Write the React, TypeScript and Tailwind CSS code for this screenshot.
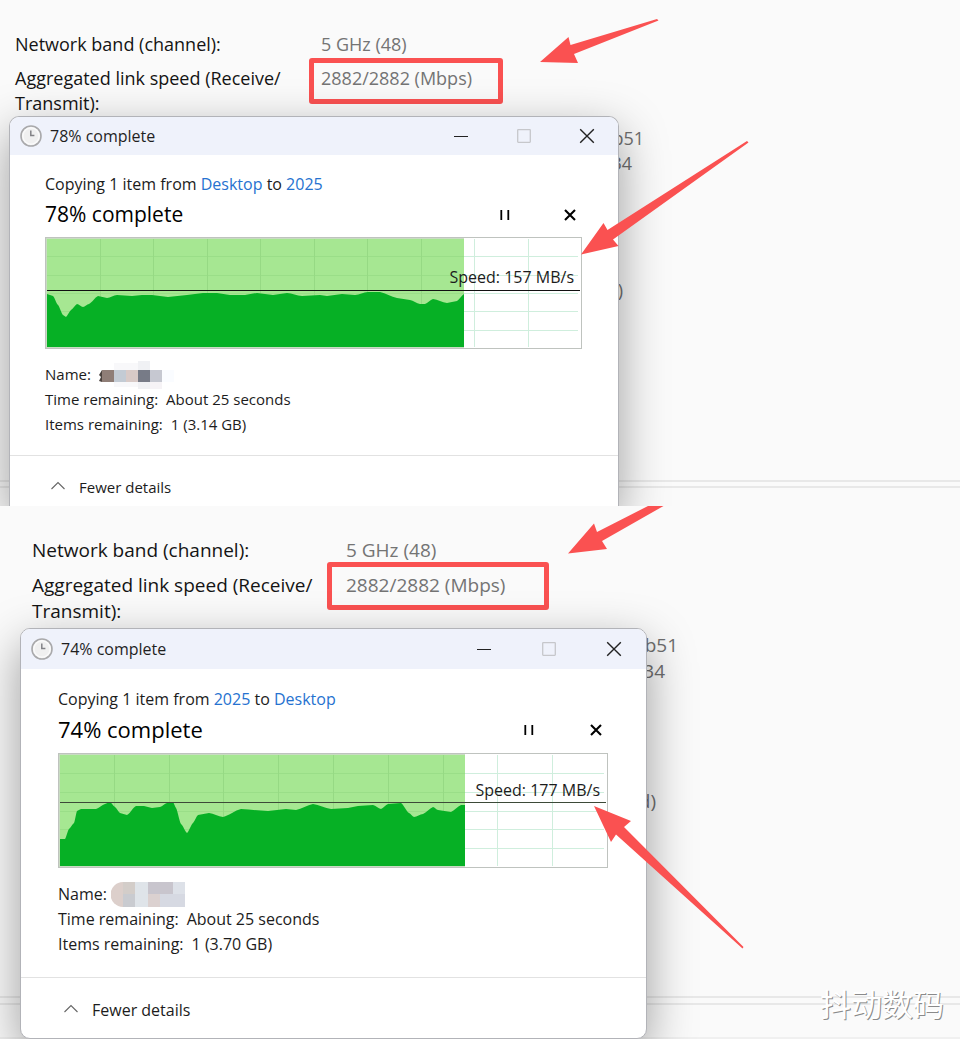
import type { ReactNode } from "react";
import clsx from "clsx";

type Point = [number, number];

// joins the samples with soft shoulders, then closes the area at the bottom
function areaPath(points: Point[], height: number) {
  let d = `M${points[0][0]} ${height}L${points[0][0]} ${points[0][1]}`;
  for (let i = 1; i < points.length; i++) {
    const [x0, y0] = points[i - 1];
    const [x1, y1] = points[i];
    const slope = (y1 - y0) / 6;
    const dx = (x1 - x0) / 3;
    d += `C${x0 + dx} ${y0 + slope} ${x1 - dx} ${y1 - slope} ${x1} ${y1}`;
  }
  return `${d}V${height}Z`;
}

const receiveSamples: Point[] = [
  [1, 56], [7, 58], [12, 67], [17, 77], [20, 79], [25, 72], [31, 66], [37, 69],
  [43, 66], [52, 58], [61, 60], [71, 57], [86, 58], [96, 57], [106, 57],
  [122, 59], [141, 57], [157, 55], [171, 55], [184, 57], [199, 57], [211, 55],
  [227, 57], [241, 55], [256, 58], [274, 57], [281, 58], [296, 56], [309, 57],
  [322, 54], [334, 54], [351, 60], [364, 62], [374, 66], [379, 66], [387, 61],
  [401, 65], [411, 63], [418, 56],
];

const sendSamples: Point[] = [
  [1, 85], [6, 85], [10, 75], [15, 69], [18, 57], [22, 55], [37, 55], [46, 50],
  [51, 48], [56, 53], [61, 59], [68, 61], [77, 52], [85, 52], [93, 54],
  [101, 53], [108, 49], [114, 48], [117, 54], [122, 70], [128, 79], [134, 69],
  [139, 61], [150, 59], [164, 63], [182, 55], [209, 57], [227, 55], [237, 56],
  [254, 50], [272, 55], [289, 54], [299, 52], [314, 51], [322, 55], [329, 50],
  [342, 49], [350, 59], [355, 63], [364, 60], [374, 53], [379, 56], [392, 58],
  [402, 51], [406, 51],
];

interface ChartProps {
  width: number;
  height: number;
  done: number;
  level: number;
  samples: Point[];
  speed: string;
  lineColor: string;
  className: string;
  speedClassName: string;
}

function SpeedChart({
  width,
  height,
  done,
  level,
  samples,
  speed,
  lineColor,
  className,
  speedClassName,
}: ChartProps) {
  const cols = Array.from({ length: 9 }, (_, i) => Math.round(((i + 1) * width) / 10));
  const rows = Array.from({ length: 5 }, (_, i) => Math.round(((i + 1) * height) / 6));
  return (
    <div className={clsx("relative border border-[#bfc3bf]", className)}>
      <svg
        viewBox={`0 0 ${width} ${height}`}
        preserveAspectRatio="none"
        className="block h-full w-full"
        aria-hidden="true"
      >
        <rect width={width} height={height} fill="#fff" />
        {rows.map((y) => (
          <rect key={y} x={1} y={y} width={width - 4} height={1} fill="#cfeedd" />
        ))}
        {cols.map((x) => (
          <rect key={x} x={x} y={1} width={1} height={height - 2} fill="#cfeedd" />
        ))}
        <rect width={done} height={height} fill="#c9dcc2" />
        <rect x={1} y={1} width={done - 1} height={height - 2} fill="#a6e792" />
        {rows.map((y) => (
          <rect key={y} x={1} y={y} width={done - 1} height={1} fill="#9ade88" />
        ))}
        {cols
          .filter((x) => x < done)
          .map((x) => (
            <rect key={x} x={x} y={1} width={1} height={height - 2} fill="#96d984" />
          ))}
        <path d={areaPath(samples, height - 1)} fill="#06b025" />
        <rect x={1} y={level} width={width - 2} height={1} fill={lineColor} />
      </svg>
      <span className={clsx("absolute right-[7px] text-[16px] leading-6 text-[#1c1c1c]", speedClassName)}>
        {speed}
      </span>
    </div>
  );
}

function ClockIcon() {
  return (
    <svg viewBox="0 0 22 22" className="size-[22px]" aria-hidden="true">
      <circle cx="11" cy="11" r="10" fill="#e9e9e9" stroke="#a9a9ab" strokeWidth="1.6" />
      <circle cx="11" cy="11" r="8.2" fill="#f0f0f0" stroke="#fafafa" strokeWidth="1.6" />
      <path d="M10.8 5.5V10.6H14.4" fill="none" stroke="#828286" strokeWidth="1.5" />
    </svg>
  );
}

function WindowButton({ label, large, children }: { label: string; large?: boolean; children: ReactNode }) {
  return (
    <button
      type="button"
      aria-label={label}
      className={clsx("flex h-full items-center justify-center", large ? "w-[65px]" : "w-[63px]")}
    >
      <svg viewBox="0 0 16 16" className="size-4" fill="none">
        {children}
      </svg>
    </button>
  );
}

interface DialogProps {
  percent: string;
  from: string;
  to: string;
  size: string;
  large?: boolean;
  chart: ReactNode;
  mosaic: ReactNode;
}

function CopyDialog({ percent, from, to, size, large, chart, mosaic }: DialogProps) {
  return (
    <div
      className={clsx(
        "relative overflow-hidden border-[#b2b3b8] bg-white text-[16px] shadow-[0_16px_48px_rgba(0,0,0,0.38)]",
        large ? "rounded-[10px] border" : "rounded-t-[10px] border-x border-t",
      )}
    >
      <header className={clsx("flex items-center bg-[#eff2fb] pl-[10px]", large ? "h-10" : "h-[38px]")}>
        <ClockIcon />
        <h2 className="ml-2 flex-1 text-[#1f1f1f]">{percent} complete</h2>
        <WindowButton label="Minimize" large={large}>
          <path d="M1 8.5H15" stroke="#222" strokeWidth="1" />
        </WindowButton>
        <WindowButton label="Maximize" large={large}>
          <rect x="1.7" y="1.7" width="12.6" height="12.6" rx="0.5" stroke="#c6c7cb" strokeWidth="1.3" />
        </WindowButton>
        <WindowButton label="Close" large={large}>
          <path d="M1.2 1.2L14.8 14.8M14.8 1.2L1.2 14.8" stroke="#222" strokeWidth="1.4" />
        </WindowButton>
      </header>

      <div
        className={clsx(
          "text-[#1c1c1c]",
          large ? "pt-[18px] pr-[38px] pb-5 pl-[37px]" : "pt-[17px] pr-9 pb-[18px] pl-[35px]",
        )}
      >
        <p className="leading-6">
          Copying 1 item from{" "}
          <a href="#" className="text-[#2672d0]">{from}</a> to{" "}
          <a href="#" className="text-[#2672d0]">{to}</a>
        </p>
        <div className={clsx("mt-[3px] flex items-end", large ? "gap-[43px]" : "gap-[41px]")}>
          <h3 className={clsx("flex-1 leading-[30px] text-black", large ? "text-[22px]" : "text-[21px]")}>
            {percent} complete
          </h3>
          <button type="button" aria-label="Pause" className="flex h-7 w-6 items-center justify-center">
            <svg viewBox="0 0 12 12" className="size-3" fill="none">
              <path d="M2.3 1V11M9.3 1V11" stroke="#000" strokeWidth="1.8" />
            </svg>
          </button>
          <button type="button" aria-label="Cancel" className="flex h-7 w-6 items-center justify-center">
            <svg viewBox="0 0 12 12" className="size-3" fill="none">
              <path d="M1 1L11 11M11 1L1 11" stroke="#000" strokeWidth="2.1" />
            </svg>
          </button>
        </div>
        {chart}
        <div className={clsx("leading-[25px]", large ? "mt-[14px]" : "mt-[13px] text-[15px]")}>
          <p className={clsx("flex items-center", large ? "gap-1" : "gap-2")}>
            Name: {mosaic}
          </p>
          <p className="flex gap-2">
            <span>Time remaining:</span>
            <span>About 25 seconds</span>
          </p>
          <p className="flex gap-2">
            <span>Items remaining:</span>
            <span>{size}</span>
          </p>
        </div>
      </div>

      <footer
        className={clsx(
          "border-t border-[#e2e2e2]",
          large ? "pt-5 pb-4 pl-[42px]" : "pt-[19px] pb-[7px] pl-10 text-[15px]",
        )}
      >
        <button type="button" className="flex items-center gap-[13px] leading-6 text-[#1c1c1c]">
          <svg viewBox="0 0 16 16" className="size-4" fill="none" aria-hidden="true">
            <path d="M1.5 10L8 3.5L14.5 10" stroke="#666" strokeWidth="1.1" />
          </svg>
          Fewer details
        </button>
      </footer>
    </div>
  );
}

function LinkInfo({ large }: { large?: boolean }) {
  return (
    <dl
      className={clsx(
        "grid gap-y-[9px] text-[#141414]",
        large
          ? "grid-cols-[314px_1fr] pt-[31px] pl-8 text-[19px] leading-[26px]"
          : "grid-cols-[306px_1fr] pt-8 pl-[15px] text-[18px] leading-[25px]",
      )}
    >
      <dt>Network band (channel):</dt>
      <dd className="text-[#747474]">5 GHz (48)</dd>
      <dt>
        Aggregated link speed (Receive/
        <br />
        Transmit):
      </dt>
      <dd className="relative text-[#747474]">
        2882/2882 (Mbps)
        <span
          className={clsx(
            "absolute rounded-[3px] border-5 border-[#fa5151]",
            large ? "-top-[10px] -left-[19px] h-12 w-[222px]" : "-top-2 -left-3 h-[46px] w-[194px]",
          )}
        />
      </dd>
    </dl>
  );
}

export default function App() {
  return (
    <main className="bg-[#fafafa] font-['Open_Sans','Noto_Sans',sans-serif]">
      <section className="relative isolate overflow-hidden">
        <div className="absolute inset-x-0 bottom-0 -z-10 h-[26px] border-t-2 border-[#e8e8e8] bg-[#fafafa]" />
        <div className="absolute inset-x-0 bottom-0 -z-10 h-5 border-t-2 border-[#e8e8e8] bg-[#fafafa]" />
        <LinkInfo />
        <div className="relative isolate ml-[9px] w-full max-w-[610px]">
          <div className="absolute inset-0 -z-10 text-[18px] leading-[26px] text-[#6f6f6f]">
            <span className="absolute top-[9px] -right-[25px]">b51</span>
            <span className="absolute top-[34px] -right-[13px]">34</span>
            <span className="absolute top-[161px] -right-[4px]">)</span>
          </div>
          <CopyDialog
            percent="78%"
            from="Desktop"
            to="2025"
            size="1 (3.14 GB)"
            chart={
              <SpeedChart
                className="mt-2 h-28"
                speedClassName="bottom-[59px]"
                width={535}
                height={110}
                done={418}
                level={52}
                samples={receiveSamples}
                speed="Speed: 157 MB/s"
                lineColor="#111"
              />
            }
            mosaic={
              <svg viewBox="0 0 78 28" className="-my-1 h-7 w-[78px]" aria-hidden="true">
                <rect x="15" y="2" width="36" height="24" fill="#f8f8fa" />
                <rect x="39" y="0" width="12" height="28" fill="#f0f1f4" />
                <rect x="51" y="20" width="12" height="8" fill="#f6f3f6" />
                <rect x="63" y="9" width="12" height="12" fill="#fafcff" />
                <path d="M3 9L0 14L2 16L0 20L3 21Z" fill="#4c4440" />
                <rect x="3" y="9" width="12" height="12" fill="#8f7e77" />
                <rect x="15" y="9" width="12" height="12" fill="#c3cbd4" />
                <rect x="27" y="9" width="12" height="12" fill="#d8cac7" />
                <rect x="39" y="9" width="12" height="12" fill="#777b87" />
                <rect x="51" y="9" width="12" height="12" fill="#c6c8d1" />
              </svg>
            }
          />
        </div>
        <svg viewBox="0 0 960 506" className="pointer-events-none absolute top-0 left-0 w-[960px]" fill="#fa5151" aria-hidden="true">
          <path d="M540 62L568.5 37L570.5 45L657 19L658.5 20.5L574 54L578 63Z" />
          <path d="M581 254.5L603.5 223L607.5 230L747 141L748.5 142.5L613 239.5L618.5 246Z" />
        </svg>
      </section>

      <section className="relative isolate overflow-hidden">
        <div className="absolute inset-x-0 bottom-0 -z-10 h-[43px] border-t-2 border-[#e8e8e8] bg-[#fafafa]" />
        <div className="absolute inset-x-0 bottom-0 -z-10 h-9 border-y-2 border-t-[#e8e8e8] border-b-[#f0f0f0] bg-[#fafafa]" />
        <LinkInfo large />
        <div className="relative isolate mt-1 ml-5 w-full max-w-[627px]">
          <div className="absolute inset-0 -z-10 text-[19px] leading-[26px] text-[#6f6f6f]">
            <span className="absolute top-1 -right-[31px]">8b51</span>
            <span className="absolute top-[30px] -right-[18px]">34</span>
            <span className="absolute top-40 -right-[9px]">d)</span>
          </div>
          <CopyDialog
            large
            percent="74%"
            from="2025"
            to="Desktop"
            size="1 (3.70 GB)"
            chart={
              <SpeedChart
                className="mt-[9px] h-[115px]"
                speedClassName="bottom-[65px]"
                width={548}
                height={113}
                done={406}
                level={48}
                samples={sendSamples}
                speed="Speed: 177 MB/s"
                lineColor="#3d4a38"
              />
            }
            mosaic={
              <svg viewBox="0 0 74 25" className="h-[25px] w-[74px]" aria-hidden="true">
                <path d="M12 0H24V25H12A12 12 0 0 1 12 0Z" fill="#dccfcb" />
                <rect x="12" y="0" width="12" height="12" fill="#d3cdc9" />
                <rect x="12" y="12" width="12" height="13" fill="#c9cbd0" />
                <rect x="24" y="0" width="13" height="25" fill="#dfe4e9" />
                <rect x="37" y="0" width="25" height="12" fill="#c8c5cd" />
                <rect x="37" y="12" width="12" height="13" fill="#dbd1d0" />
                <rect x="49" y="12" width="25" height="13" fill="#d6d9e2" />
                <rect x="62" y="0" width="12" height="12" fill="#dde1e8" />
              </svg>
            }
          />
        </div>
        <svg viewBox="0 0 960 533" className="pointer-events-none absolute top-0 left-0 w-[960px]" fill="#fa5151" aria-hidden="true">
          <path d="M568 47.5L594 17.5L597 26L648 0H663.5L602 35L607 43Z" />
          <path d="M594 300L631 315L624 321L743.5 441L742.5 442.5L616 328.5L611 336Z" />
        </svg>
        <p className="absolute right-4 bottom-5 font-['Noto_Sans_CJK_SC',sans-serif] text-[31px] leading-8 text-white [text-shadow:1px_1px_0_#8a8a8a]">
          抖动数码
        </p>
      </section>
    </main>
  );
}
